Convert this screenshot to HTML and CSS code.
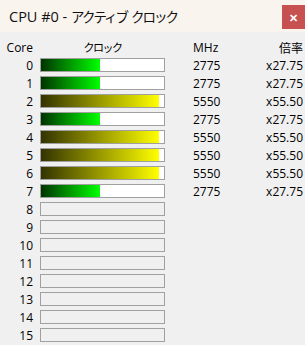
FILE: index.html
```html
<!DOCTYPE html>
<html>
<head>
<meta charset="utf-8">
<link rel="stylesheet" href="styles.css">
</head>
<body>
<div class="titlebar">
  <span class="title">CPU #0 - <span class="kana">アクティブ クロック</span></span>
  <span class="close">✕</span>
</div>
<div class="grid">
  <div class="lbl">Core</div><div class="hc">クロック</div><div class="mhz">MHz</div><div class="ratio cjk">倍率</div>

  <div class="lbl">0</div><div class="bar"><div class="fill g" style="width:48%"></div></div><div class="mhz">2775</div><div class="ratio">x27.75</div>
  <div class="lbl">1</div><div class="bar"><div class="fill g" style="width:48%"></div></div><div class="mhz">2775</div><div class="ratio">x27.75</div>
  <div class="lbl">2</div><div class="bar"><div class="fill y" style="width:96%"></div></div><div class="mhz">5550</div><div class="ratio">x55.50</div>
  <div class="lbl">3</div><div class="bar"><div class="fill g" style="width:48%"></div></div><div class="mhz">2775</div><div class="ratio">x27.75</div>
  <div class="lbl">4</div><div class="bar"><div class="fill y" style="width:96%"></div></div><div class="mhz">5550</div><div class="ratio">x55.50</div>
  <div class="lbl">5</div><div class="bar"><div class="fill y" style="width:96%"></div></div><div class="mhz">5550</div><div class="ratio">x55.50</div>
  <div class="lbl">6</div><div class="bar"><div class="fill y" style="width:96%"></div></div><div class="mhz">5550</div><div class="ratio">x55.50</div>
  <div class="lbl">7</div><div class="bar"><div class="fill g" style="width:48%"></div></div><div class="mhz">2775</div><div class="ratio">x27.75</div>
  <div class="lbl">8</div><div class="bar empty"></div><div></div><div></div>
  <div class="lbl">9</div><div class="bar empty"></div><div></div><div></div>
  <div class="lbl">10</div><div class="bar empty"></div><div></div><div></div>
  <div class="lbl">11</div><div class="bar empty"></div><div></div><div></div>
  <div class="lbl">12</div><div class="bar empty"></div><div></div><div></div>
  <div class="lbl">13</div><div class="bar empty"></div><div></div><div></div>
  <div class="lbl">14</div><div class="bar empty"></div><div></div><div></div>
  <div class="lbl">15</div><div class="bar empty"></div><div></div><div></div>
</div>
</body>
</html>
```
FILE: styles.css
```css
html, body {
  margin: 0;
  padding: 0;
  background: #f0f0f0;
  font-family: "Open Sans", "Noto Sans CJK JP", sans-serif;
  color: #000;
  overflow: hidden;
}
.titlebar {
  height: 32px;
  background: #f9f4ee;
  display: flex;
  align-items: center;
  justify-content: space-between;
  padding-left: 9px;
}
.title {
  font-size: 14.5px;
  font-family: "Open Sans", "Noto Sans CJK JP", sans-serif;
  color: #111;
  white-space: nowrap;
}
.kana {
  font-family: "Noto Sans CJK JP", sans-serif;
  font-size: 13.5px;
  letter-spacing: -2px;
  word-spacing: 3px;
}
.close {
  align-self: flex-start;
  margin-top: 5px;
  width: 23px;
  height: 24px;
  background: #c75050;
  color: #fff;
  font-size: 11px;
  font-weight: bold;
  display: flex;
  align-items: center;
  justify-content: center;
}
.grid {
  display: grid;
  grid-template-columns: 40px 125px auto 1fr;
  grid-auto-rows: 18px;
  padding-top: 6px;
  padding-right: 2px;
  font-size: 12px;
  align-items: center;
}
.lbl {
  text-align: right;
  padding-right: 7px;
}
.hc {
  text-align: center;
  font-family: "Noto Sans CJK JP", sans-serif;
  font-size: 11px;
  letter-spacing: -1.5px;
}
.mhz {
  padding-left: 28px;
}
.ratio {
  text-align: right;
}
.cjk {
  font-family: "Noto Sans CJK JP", sans-serif;
}
.bar {
  height: 14px;
  box-sizing: border-box;
  border: 1px solid #a0a0a0;
  background: #fff;
  display: flex;
}
.bar.empty {
  background: #f0f0f0;
}
.fill {
  height: 100%;
}
.fill.g {
  background: linear-gradient(to right, #003300, #00ff00);
}
.fill.y {
  background: linear-gradient(to right, #333300, #ffff00);
}
```
